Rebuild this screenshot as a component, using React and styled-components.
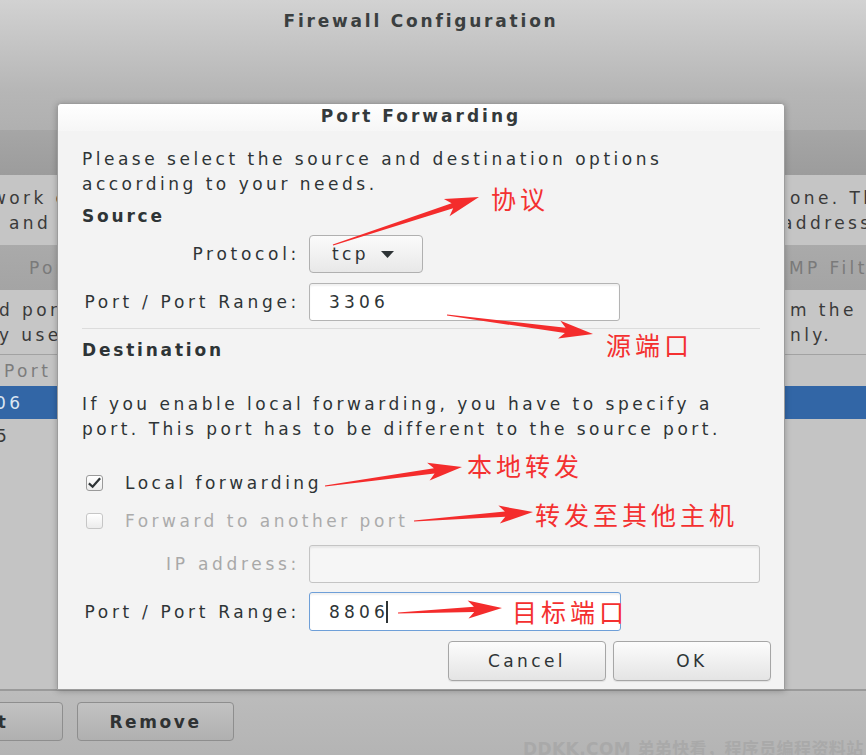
import React from "react";
import styled, { createGlobalStyle } from "styled-components";

const GlobalStyle = createGlobalStyle`
  html, body { margin: 0; padding: 0; }
  body { font-family: "DejaVu Sans", "Noto Sans CJK SC", sans-serif; }
`;

const FONT = `"DejaVu Sans", "Noto Sans CJK SC", sans-serif`;

const Page = styled.div`
  position: relative;
  width: 866px;
  height: 755px;
  overflow: hidden;
  background: #c4c4c4;
  font-family: ${FONT};
`;

/* ---------- background window ---------- */
const Window = styled.div`
  display: flex;
  flex-direction: column;
  height: 100%;
`;

const HeaderBar = styled.div`
  height: 130px;
  flex: none;
  background: linear-gradient(#d2d2d2, #b6b6b6 70%, #b0b0b0);
  display: flex;
  justify-content: center;
  padding-right: 24px;
  box-sizing: border-box;
`;

const WindowTitle = styled.div`
  margin-top: 11px;
  font-size: 17px;
  font-weight: bold;
  letter-spacing: 2.8px;
  color: #3b3f40;
  height: 22px;
`;

const Band = styled.div`
  flex: none;
  height: ${(p) => p.$h}px;
  background: ${(p) => p.$bg};
  border-bottom: ${(p) => (p.$line ? "1px solid #a2a2a2" : "none")};
  box-sizing: border-box;
  display: flex;
  flex-direction: column;
  justify-content: center;
`;

const BgLine = styled.div`
  display: flex;
  height: 25px;
  align-items: center;
  white-space: nowrap;
  font-size: 17px;
  letter-spacing: 3.4px;
  color: ${(p) => p.$color || "#3a3a3a"};
`;

const LeftCell = styled.div`
  width: 57px;
  overflow: hidden;
  padding-left: ${(p) => p.$pad || 0}px;
  box-sizing: border-box;
  flex: none;
`;

const Shift = styled.span`
  display: inline-block;
  margin-left: ${(p) => p.$offset || 0}px;
`;

const Spacer = styled.div`
  flex: 1;
`;

const RightCell = styled.div`
  width: 78px;
  overflow: hidden;
  flex: none;
`;

const ListFill = styled.div`
  flex: 1;
  background: #c4c4c4;
  padding-top: 4px;
`;

const BottomBar = styled.div`
  flex: none;
  height: 66px;
  border-top: 2px solid #9a9a9a;
  background: linear-gradient(#bcbcbc, #b4b4b4);
  display: flex;
  align-items: flex-start;
  padding-top: 11px;
  box-sizing: border-box;
  gap: 14px;
`;

const BgButton = styled.div`
  height: 39px;
  width: ${(p) => p.$w}px;
  margin-left: ${(p) => p.$ml || 0}px;
  flex: none;
  box-sizing: border-box;
  border: 1px solid #8e8e8e;
  border-radius: 4px;
  background: linear-gradient(#c2c2c2, #b0b0b0);
  display: flex;
  align-items: center;
  justify-content: center;
  font-size: 17px;
  font-weight: bold;
  letter-spacing: 2.6px;
  color: #2f3233;
  white-space: nowrap;
`;

const Watermark = styled.div`
  position: absolute;
  left: 523px;
  top: 735px;
  font-size: 17px;
  font-weight: bold;
  color: #a9a9a9;
  white-space: nowrap;
  letter-spacing: 0.4px;
`;

/* ---------- dialog ---------- */
const Dialog = styled.div`
  position: absolute;
  left: 57px;
  top: 103px;
  width: 728px;
  height: 587px;
  box-sizing: border-box;
  background: #f3f3f3;
  border: 1px solid #9c9c9c;
  border-radius: 4px 4px 0 0;
  box-shadow: 0 1px 6px rgba(0, 0, 0, 0.25);
  display: flex;
  flex-direction: column;
  color: #2e3436;
`;

const DialogTitle = styled.div`
  height: 27px;
  flex: none;
  box-sizing: border-box;
  padding-bottom: 3px;
  display: flex;
  align-items: center;
  justify-content: center;
  font-size: 17px;
  font-weight: bold;
  letter-spacing: 3px;
  color: #343a3c;
  background: linear-gradient(#ffffff, #f6f6f6);
  border-radius: 4px 4px 0 0;
`;

const Body = styled.div`
  padding: 16px 24px 0 24px;
  display: flex;
  flex-direction: column;
`;

const Para = styled.div`
  font-size: 17px;
  line-height: 25px;
  letter-spacing: 3.5px;
  margin-top: ${(p) => p.$mt || 0}px;
  white-space: nowrap;
`;

const Heading = styled.div`
  font-size: 17px;
  line-height: 25px;
  font-weight: bold;
  letter-spacing: 2.8px;
  margin-top: ${(p) => p.$mt || 0}px;
`;

const FormRow = styled.div`
  display: grid;
  grid-template-columns: 215px 1fr;
  column-gap: 12px;
  align-items: center;
  margin-top: ${(p) => p.$mt || 0}px;
`;

const Label = styled.div`
  text-align: right;
  font-size: 17px;
  letter-spacing: 3.7px;
  margin-right: -3px;
  white-space: nowrap;
  color: ${(p) => (p.$disabled ? "#a8a8a8" : "#2e3436")};
`;

const Entry = styled.div`
  width: ${(p) => p.$w}px;
  height: ${(p) => p.$h || 38}px;
  box-sizing: border-box;
  border: 1px solid ${(p) => (p.$focus ? "#6e9fd8" : p.$disabled ? "#c4c4c4" : "#b4b4b4")};
  border-radius: 3px;
  background: ${(p) => (p.$disabled ? "#f6f6f6" : "#ffffff")};
  box-shadow: inset 0 2px 2px rgba(0, 0, 0, 0.06);
  display: flex;
  align-items: center;
  padding-left: 19px;
  font-size: 17px;
  letter-spacing: 4.2px;
  color: #2e3436;
`;

const Caret = styled.span`
  display: inline-block;
  width: 1.5px;
  height: 22px;
  background: #2e3436;
  margin-left: -3px;
`;

const Combo = styled.div`
  width: 114px;
  height: 38px;
  box-sizing: border-box;
  border: 1px solid #b0b0b0;
  border-radius: 4px;
  background: linear-gradient(#fbfbfb, #e8e8e8);
  display: flex;
  align-items: center;
  padding-left: 22px;
  gap: 12px;
  font-size: 17px;
  letter-spacing: 3.4px;
`;

const Separator = styled.div`
  height: 1px;
  background: #dcdcdc;
  margin-top: ${(p) => p.$mt || 0}px;
`;

const CheckRow = styled.div`
  display: flex;
  align-items: center;
  gap: 22px;
  height: 26px;
  margin-top: ${(p) => p.$mt || 0}px;
  padding-left: 4px;
  font-size: 17px;
  letter-spacing: 3.5px;
  color: ${(p) => (p.$disabled ? "#ababab" : "#2e3436")};
`;

const CheckBox = styled.div`
  width: 17px;
  height: 16px;
  flex: none;
  box-sizing: border-box;
  border: 1px solid ${(p) => (p.$disabled ? "#c6c6c6" : "#9a9a9a")};
  border-radius: 3px;
  background: linear-gradient(#ffffff, #ececec);
  display: flex;
  align-items: center;
  justify-content: center;
`;

const ButtonRow = styled.div`
  display: flex;
  justify-content: flex-end;
  gap: 7px;
  margin-top: 10px;
  margin-right: -11px;
`;

const DlgButton = styled.div`
  width: 158px;
  height: 40px;
  box-sizing: border-box;
  border: 1px solid #a6a6a6;
  border-radius: 4px;
  background: linear-gradient(#fcfcfc, #e4e4e4);
  box-shadow: 0 1px 1px rgba(0, 0, 0, 0.08);
  display: flex;
  align-items: center;
  justify-content: center;
  font-size: 17px;
  letter-spacing: 3.4px;
  color: #2e3436;
`;

/* ---------- annotations ---------- */
const Overlay = styled.svg`
  position: absolute;
  left: 0;
  top: 0;
  pointer-events: none;
`;

const Note = styled.div`
  position: absolute;
  left: ${(p) => p.$x}px;
  top: ${(p) => p.$y}px;
  font-family: "Noto Sans CJK SC", sans-serif;
  font-size: 25px;
  line-height: 26px;
  letter-spacing: 4px;
  color: #f43030;
  white-space: nowrap;
`;

const arrows = [
  { x1: 333, y1: 245, x2: 479, y2: 197 },
  { x1: 447, y1: 315, x2: 593, y2: 334 },
  { x1: 325, y1: 486, x2: 462, y2: 467 },
  { x1: 414, y1: 521, x2: 533, y2: 512 },
  { x1: 398, y1: 613, x2: 502, y2: 608 },
];

function arrowPoints({ x1, y1, x2, y2 }) {
  const dx = x2 - x1;
  const dy = y2 - y1;
  const L = Math.hypot(dx, dy);
  const ux = dx / L;
  const uy = dy / L;
  const nx = -uy;
  const ny = ux;
  const head = 28;
  const hw = 9;
  const sw = 2.6;
  const back = 6;
  const bx = x2 - ux * head;
  const by = y2 - uy * head;
  const wx = bx - ux * back;
  const wy = by - uy * back;
  const pts = [
    [x1 + nx * 0.6, y1 + ny * 0.6],
    [bx + nx * sw, by + ny * sw],
    [wx + nx * hw, wy + ny * hw],
    [x2, y2],
    [wx - nx * hw, wy - ny * hw],
    [bx - nx * sw, by - ny * sw],
    [x1 - nx * 0.6, y1 - ny * 0.6],
  ];
  return pts.map((p) => p.map((v) => v.toFixed(1)).join(",")).join(" ");
}

const notes = [
  { x: 491, y: 185, text: "协议" },
  { x: 606, y: 331, text: "源端口" },
  { x: 467, y: 452, text: "本地转发" },
  { x: 535, y: 501, text: "转发至其他主机" },
  { x: 512, y: 598, text: "目标端口" },
];

export default function App() {
  return (
    <Page>
      <GlobalStyle />
      <Window>
        <HeaderBar>
          <WindowTitle>Firewall Configuration</WindowTitle>
        </HeaderBar>
        <Band $h={45} $bg="linear-gradient(#a6a6a6, #9c9c9c)" />
        <Band $h={70} $bg="#c5c5c5">
          <BgLine>
            <LeftCell>
              <Shift $offset={-8}>work c</Shift>
            </LeftCell>
            <Spacer />
            <RightCell>
              <Shift $offset={2}>one. The</Shift>
            </RightCell>
          </BgLine>
          <BgLine>
            <LeftCell $pad={9}>and</LeftCell>
            <Spacer />
            <RightCell>
              <Shift $offset={-6}>addresses</Shift>
            </RightCell>
          </BgLine>
        </Band>
        <Band $h={45} $bg="linear-gradient(#aaaaaa, #a4a4a4)">
          <BgLine $color="#7a7a7a">
            <LeftCell $pad={29}>Port</LeftCell>
            <Spacer />
            <RightCell>
              <Shift $offset={1}>MP Filter</Shift>
            </RightCell>
          </BgLine>
        </Band>
        <Band $h={65} $bg="#c6c6c6" $line>
          <BgLine>
            <LeftCell>
              <Shift $offset={-1}>d port</Shift>
            </LeftCell>
            <Spacer />
            <RightCell>
              <Shift $offset={2}>m the list</Shift>
            </RightCell>
          </BgLine>
          <BgLine>
            <LeftCell>
              <Shift $offset={-1}>y used</Shift>
            </LeftCell>
            <Spacer />
            <RightCell>
              <Shift $offset={2}>nly.</Shift>
            </RightCell>
          </BgLine>
        </Band>
        <Band $h={31} $bg="#c4c4c4">
          <BgLine $color="#7c7c7c">
            <LeftCell $pad={4}>Port</LeftCell>
          </BgLine>
        </Band>
        <Band $h={33} $bg="#3266a6">
          <BgLine $color="#dce6f2">
            <LeftCell>
              <Shift $offset={-5}>06</Shift>
            </LeftCell>
          </BgLine>
        </Band>
        <ListFill>
          <BgLine>
            <LeftCell>
              <Shift $offset={-4}>5</Shift>
            </LeftCell>
          </BgLine>
        </ListFill>
        <BottomBar>
          <BgButton $w={157} $ml={-94}>
            Edit
          </BgButton>
          <BgButton $w={157}>Remove</BgButton>
        </BottomBar>
      </Window>
      <Watermark>DDKK.COM 弟弟快看，程序员编程资料站</Watermark>

      <Dialog>
        <DialogTitle>Port Forwarding</DialogTitle>
        <Body>
          <Para>
            Please select the source and destination options
            <br />
            according to your needs.
          </Para>
          <Heading $mt={7}>Source</Heading>
          <FormRow $mt={6}>
            <Label>Protocol:</Label>
            <Combo>
              <span>tcp</span>
              <svg width="13" height="7" viewBox="0 0 13 7">
                <polygon points="0,0 13,0 6.5,7" fill="#2e3436" />
              </svg>
            </Combo>
          </FormRow>
          <FormRow $mt={10}>
            <Label>Port / Port Range:</Label>
            <Entry $w={311}>3306</Entry>
          </FormRow>
          <Separator $mt={7} />
          <Heading $mt={9}>Destination</Heading>
          <Para $mt={29}>
            If you enable local forwarding, you have to specify a
            <br />
            port. This port has to be different to the source port.
          </Para>
          <CheckRow $mt={28}>
            <CheckBox>
              <svg width="16" height="14" viewBox="0 0 16 14">
                <path d="M2 7.5 L6 11 L14 2" stroke="#2e3436" strokeWidth="2.4" fill="none" />
              </svg>
            </CheckBox>
            <span>Local forwarding</span>
          </CheckRow>
          <CheckRow $mt={12} $disabled>
            <CheckBox $disabled />
            <span>Forward to another port</span>
          </CheckRow>
          <FormRow $mt={11}>
            <Label $disabled>IP address:</Label>
            <Entry $w={451} $disabled />
          </FormRow>
          <FormRow $mt={9}>
            <Label>Port / Port Range:</Label>
            <Entry $w={312} $h={39} $focus>
              8806
              <Caret />
            </Entry>
          </FormRow>
          <ButtonRow>
            <DlgButton>Cancel</DlgButton>
            <DlgButton>OK</DlgButton>
          </ButtonRow>
        </Body>
      </Dialog>

      <Overlay width="866" height="755" viewBox="0 0 866 755">
        {arrows.map((a, i) => (
          <polygon key={i} points={arrowPoints(a)} fill="#f42c2c" />
        ))}
      </Overlay>
      {notes.map((n, i) => (
        <Note key={i} $x={n.x} $y={n.y}>
          {n.text}
        </Note>
      ))}
    </Page>
  );
}
